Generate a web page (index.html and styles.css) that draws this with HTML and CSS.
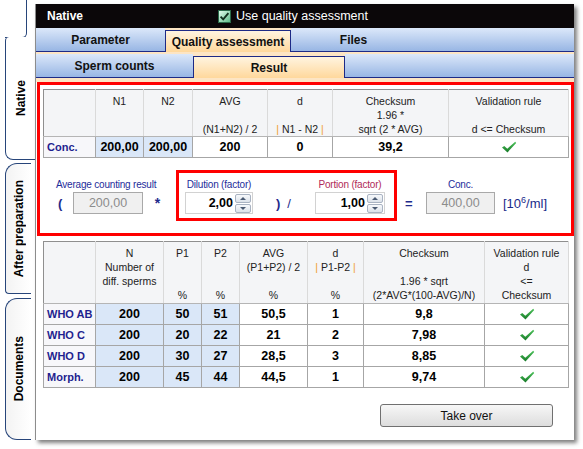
FILE: index.html
```html
<!DOCTYPE html>
<html lang="en">
<head>
    <meta charset="UTF-8">
    <title>Quality assessment - Result</title>
    <link rel="stylesheet" href="styles.css">
</head>
<body>
    <svg width="0" height="0" class="defs">
        <defs>
            <linearGradient id="okGrad" x1="0" y1="0" x2="0" y2="1">
                <stop offset="0" stop-color="#4cc25a"/>
                <stop offset="1" stop-color="#177a28"/>
            </linearGradient>
            <symbol id="ok" viewBox="0 0 16 12">
                <path d="M1 6.6 L3.3 5.1 L6.3 7.7 L14.2 0.8 L15.2 1.9 L6.5 11.4 Z" fill="url(#okGrad)"/>
            </symbol>
        </defs>
    </svg>

    <div class="app">
        <!-- vertical tabs on the left -->
        <div class="sidebar">
            <div class="side-top"></div>
            <div class="side-tab active"><span>Native</span></div>
            <div class="side-tab prep"><span>After preparation</span></div>
            <div class="side-tab docs"><span>Documents</span></div>
        </div>

        <div class="panel">
            <div class="titlebar">
                <span class="title">Native</span>
                <label class="qa-check">
                    <span class="cb">
                        <svg width="13" height="13" viewBox="0 0 13 13">
                            <defs>
                                <linearGradient id="cbGrad" x1="0" y1="0" x2="1" y2="1">
                                    <stop offset="0" stop-color="#e9fff1"/>
                                    <stop offset="1" stop-color="#58b985"/>
                                </linearGradient>
                            </defs>
                            <rect x="0.5" y="0.5" width="12" height="12" fill="url(#cbGrad)" stroke="#2b6a4a"/>
                            <path d="M2.6 6.6 L5.2 9.3 L10.4 3.2" fill="none" stroke="#12301f" stroke-width="1.9"/>
                        </svg>
                    </span>
                    Use quality assessment
                </label>
            </div>

            <div class="tabs">
                <div class="tab-row">
                    <div class="tab w-param">Parameter</div>
                    <div class="tab on w-qa">Quality assessment</div>
                    <div class="tab w-files">Files</div>
                    <div class="tab fill"></div>
                </div>
                <div class="tab-row">
                    <div class="tab w-counts">Sperm counts</div>
                    <div class="tab on w-result">Result</div>
                    <div class="tab fill"></div>
                </div>
            </div>

            <div class="content">
                <div class="red-box">
                    <table class="grid grid-a">
                        <colgroup>
                            <col style="width:52px"><col style="width:48px"><col style="width:49px">
                            <col style="width:75px"><col style="width:65px"><col style="width:116px"><col style="width:120px">
                        </colgroup>
                        <tr>
                            <th></th>
                            <th>N1<br>&nbsp;<br>&nbsp;</th>
                            <th>N2<br>&nbsp;<br>&nbsp;</th>
                            <th>AVG<br>&nbsp;<br>(N1+N2) / 2</th>
                            <th>d<br>&nbsp;<br><span class="bar">|</span> N1 - N2 <span class="bar">|</span></th>
                            <th>Checksum<br>1.96 *<br>sqrt (2 * AVG)</th>
                            <th>Validation rule<br>&nbsp;<br>d &lt;= Checksum</th>
                        </tr>
                        <tr>
                            <td class="lbl">Conc.</td>
                            <td class="in">200,00</td>
                            <td class="in">200,00</td>
                            <td>200</td>
                            <td>0</td>
                            <td>39,2</td>
                            <td><svg class="ok" width="16" height="12"><use href="#ok"/></svg></td>
                        </tr>
                    </table>

                    <div class="calc">
                        <div class="grp grp-out">
                            <div class="cap">Average counting result</div>
                            <div class="ctl">
                                <span class="op paren">(</span>
                                <span class="field">200,00</span>
                                <span class="op star">*</span>
                            </div>
                        </div>

                        <div class="factor-box">
                            <div class="grp grp-dil">
                                <div class="cap">Dilution (factor)</div>
                                <div class="ctl">
                                    <span class="spin">2,00
                                        <span class="spin-btns"><span class="spin-btn up"></span><span class="spin-btn down"></span></span>
                                    </span>
                                </div>
                            </div>
                            <div class="mid-ops">
                                <span class="op">)</span>
                                <span class="op slash">/</span>
                            </div>
                            <div class="grp grp-por">
                                <div class="cap cap-red">Portion (factor)</div>
                                <div class="ctl">
                                    <span class="spin">1,00
                                        <span class="spin-btns"><span class="spin-btn up"></span><span class="spin-btn down"></span></span>
                                    </span>
                                </div>
                            </div>
                        </div>

                        <div class="eq-wrap"><span class="op eq">=</span></div>

                        <div class="grp grp-out grp-conc">
                            <div class="cap">Conc.</div>
                            <div class="ctl">
                                <span class="field">400,00</span>
                                <span class="unit">[10<sup>6</sup>/ml]</span>
                            </div>
                        </div>
                    </div>
                </div>

                <table class="grid grid-b">
                    <colgroup>
                        <col style="width:52px"><col style="width:68px"><col style="width:38px"><col style="width:38px">
                        <col style="width:68px"><col style="width:56px"><col style="width:121px"><col style="width:84px">
                    </colgroup>
                    <tr>
                        <th></th>
                        <th>N<br>Number of<br>diff. sperms<br>&nbsp;</th>
                        <th>P1<br>&nbsp;<br>&nbsp;<br>%</th>
                        <th>P2<br>&nbsp;<br>&nbsp;<br>%</th>
                        <th>AVG<br>(P1+P2) / 2<br>&nbsp;<br>%</th>
                        <th>d<br><span class="bar">|</span> P1-P2 <span class="bar">|</span><br>&nbsp;<br>%</th>
                        <th>Checksum<br>&nbsp;<br>1.96 * sqrt<br>(2*AVG*(100-AVG)/N)</th>
                        <th>Validation rule<br>d<br>&lt;=<br>Checksum</th>
                    </tr>
                    <tr>
                        <td class="lbl">WHO AB</td>
                        <td class="in">200</td><td class="in">50</td><td class="in">51</td>
                        <td>50,5</td><td>1</td><td>9,8</td>
                        <td><svg class="ok" width="16" height="12"><use href="#ok"/></svg></td>
                    </tr>
                    <tr>
                        <td class="lbl">WHO C</td>
                        <td class="in">200</td><td class="in">20</td><td class="in">22</td>
                        <td>21</td><td>2</td><td>7,98</td>
                        <td><svg class="ok" width="16" height="12"><use href="#ok"/></svg></td>
                    </tr>
                    <tr>
                        <td class="lbl">WHO D</td>
                        <td class="in">200</td><td class="in">30</td><td class="in">27</td>
                        <td>28,5</td><td>3</td><td>8,85</td>
                        <td><svg class="ok" width="16" height="12"><use href="#ok"/></svg></td>
                    </tr>
                    <tr>
                        <td class="lbl">Morph.</td>
                        <td class="in">200</td><td class="in">45</td><td class="in">44</td>
                        <td>44,5</td><td>1</td><td>9,74</td>
                        <td><svg class="ok" width="16" height="12"><use href="#ok"/></svg></td>
                    </tr>
                </table>

                <div class="actions">
                    <button type="button" class="take-over">Take over</button>
                </div>
            </div>
        </div>
    </div>
</body>
</html>
```

FILE: styles.css
```css
/* General */
* {
    box-sizing: border-box;
}

body {
    margin: 0;
    font-family: "Liberation Sans", Arial, sans-serif;
    font-size: 12px;
    color: #111;
    background: #fff;
}

.defs {
    position: absolute;
}

.app {
    display: flex;
    width: 583px;
    height: 449px;
    overflow: hidden;
}

/* Vertical tabs */
.sidebar {
    width: 35px;
    flex: none;
    display: flex;
    flex-direction: column;
}

.side-top {
    margin-left: 5px;
    width: 22px;
    height: 38px;
    border-right: 1px solid #27457a;
    border-bottom: 1px solid #27457a;
    border-bottom-right-radius: 5px;
}

.side-tab {
    margin-left: 5px;
    display: flex;
    align-items: center;
    justify-content: center;
    border: 1px solid #27457a;
    border-right: none;
    background: linear-gradient(to right, #f3f3f3, #fff);
}

.side-tab span {
    writing-mode: vertical-rl;
    transform: rotate(180deg);
    font-weight: bold;
    font-size: 12px;
    color: #000;
}

.side-tab.active {
    height: 123px;
    margin-top: -1px;
    border-top: none;
    border-radius: 4px 0 0 8px;
    background: #fff;
}

.side-tab.prep {
    height: 131px;
    margin-top: 3px;
    margin-right: 4px;
    border-radius: 12px 0 0 4px;
}

.side-tab.docs {
    height: 142px;
    margin-top: 4px;
    margin-right: 4px;
    border-radius: 12px 0 0 12px;
}

/* Main panel */
.panel {
    width: 539px;
    height: 436px;
    margin-top: 4px;
    flex: none;
    display: flex;
    flex-direction: column;
    background: #fff;
    border-left: 1px solid #8c8c8c;
    box-shadow: 3px 3px 4px rgba(0, 0, 0, 0.5);
}

.titlebar {
    height: 24px;
    flex: none;
    background: #0b0709;
    color: #fff;
    display: flex;
    align-items: center;
    padding-left: 11px;
}

.titlebar .title {
    width: 171px;
    font-weight: bold;
}

.qa-check {
    display: flex;
    align-items: center;
    gap: 5px;
    font-size: 12.5px;
}

.cb {
    display: flex;
}

/* Horizontal tabs */
.tabs {
    flex: none;
    background: #fde5c4;
    padding-bottom: 4px;
    display: flex;
    flex-direction: column;
    gap: 2px;
}

.tab-row {
    display: flex;
    height: 24px;
}

.tab {
    display: flex;
    align-items: center;
    justify-content: center;
    font-weight: bold;
    color: #111;
    border-bottom: 1px solid #1d2a86;
    background: linear-gradient(#dce8fa, #98b6e4);
}

.tab.on {
    margin-top: 2px;
    border: 1px solid #1d2a86;
    border-bottom: none;
    background: linear-gradient(#fff4e0, #ffd89c);
}

.tab.fill {
    flex: 1;
}

.w-param { width: 129px; }
.w-qa { width: 126px; }
.w-files { width: 125px; }
.w-counts { width: 157px; }
.w-result { width: 152px; }

/* Content */
.content {
    flex: 1;
    display: flex;
    flex-direction: column;
}

.red-box {
    margin-left: 1px;
    border: 3px solid #f00;
    padding: 4px 3px 12px;
}

.grid {
    border-collapse: collapse;
    table-layout: fixed;
    width: 525px;
    border: 1px solid #8f8f8f;
}

.grid th {
    vertical-align: top;
    padding: 4px 2px 0;
    line-height: 14px;
    font-size: 10.5px;
    font-weight: normal;
    color: #222;
    background: #f4f5f7;
    border-right: 1px solid #dadada;
    border-bottom: 1px solid #b5b5b5;
    white-space: nowrap;
}

.grid-b th {
    padding-bottom: 1px;
}

.grid th .bar {
    color: #f0a030;
}

.grid td {
    height: 21px;
    padding: 0;
    border: 1px solid #a6a6a6;
    text-align: center;
    font-weight: bold;
    font-size: 12.5px;
    color: #000;
    background: #fff;
}

.grid td.lbl {
    text-align: left;
    padding-left: 3px;
    font-size: 11px;
    color: #1f1f8f;
    background: #f7f7fa;
}

.grid td.in {
    background: #dae7f8;
}

.ok {
    display: block;
    margin: 0 auto;
}

/* Calculation row */
.calc {
    display: flex;
    align-items: flex-start;
    margin-top: 12px;
    padding-left: 13px;
}

.grp-out {
    margin-top: 8px;
}

.cap {
    height: 14px;
    line-height: 14px;
    font-size: 10px;
    letter-spacing: -0.2px;
    color: #1e2d9a;
    white-space: nowrap;
}

.cap-red {
    color: #b02a58;
}

.grp-dil .cap,
.grp-por .cap {
    text-align: center;
}

.ctl {
    display: flex;
    align-items: center;
    height: 22px;
}

.op {
    color: #1e2a8c;
    font-weight: bold;
    font-size: 13px;
}

.paren {
    width: 17px;
    padding-left: 2px;
}

.star {
    width: 33px;
    padding-right: 4px;
    text-align: center;
    font-size: 14px;
}

.field {
    width: 70px;
    height: 22px;
    border: 1px solid #a9a9a9;
    background: #f0f0f0;
    color: #8c8c8c;
    display: flex;
    align-items: center;
    justify-content: center;
    font-size: 12.5px;
}

.factor-box {
    display: flex;
    border: 3px solid #f00;
    padding: 5px 9px 4px 6px;
}

.spin {
    width: 68px;
    height: 22px;
    border: 1px solid #d2d2d2;
    background: #fff;
    display: flex;
    align-items: center;
    justify-content: flex-end;
    padding-right: 1px;
    font-weight: bold;
    font-size: 12.5px;
    color: #000;
}

.grp-por .spin {
    width: 70px;
}

.spin-btns {
    display: flex;
    flex-direction: column;
    gap: 1px;
    margin-left: 2px;
}

.spin-btn {
    width: 16px;
    height: 9px;
    border: 1px solid #a9b3c2;
    border-radius: 2px;
    background: linear-gradient(#f7f9fb, #dce2ea);
    display: flex;
    align-items: center;
    justify-content: center;
}

.spin-btn::before {
    content: "";
    border-left: 3px solid transparent;
    border-right: 3px solid transparent;
}

.spin-btn.up::before {
    border-bottom: 3px solid #4a5a72;
}

.spin-btn.down::before {
    border-top: 3px solid #4a5a72;
}

.mid-ops {
    width: 62px;
    height: 22px;
    margin-top: 14px;
    display: flex;
    align-items: center;
    padding-left: 23px;
    gap: 7px;
}

.slash {
    font-weight: normal;
}

.eq-wrap {
    width: 29px;
    height: 22px;
    margin-top: 22px;
    display: flex;
    align-items: center;
    padding-left: 8px;
}

.grp-conc .cap {
    width: 69px;
    text-align: center;
}

.grp-conc .field {
    width: 69px;
}

.unit {
    margin-left: 8px;
    font-size: 13px;
    color: #1a2a8a;
}

.unit sup {
    font-size: 9px;
    line-height: 0;
    vertical-align: 5px;
}

/* Second table and button */
.grid-b {
    margin: 5px 0 0 7px;
}

.actions {
    display: flex;
    justify-content: flex-end;
    margin-top: 16px;
    padding-right: 21px;
}

.take-over {
    width: 173px;
    height: 23px;
    border: 1px solid #707070;
    border-radius: 3px;
    background: linear-gradient(#f7f7f7, #dddddd);
    font-family: "Liberation Sans", Arial, sans-serif;
    font-size: 12px;
    color: #111;
}
```
